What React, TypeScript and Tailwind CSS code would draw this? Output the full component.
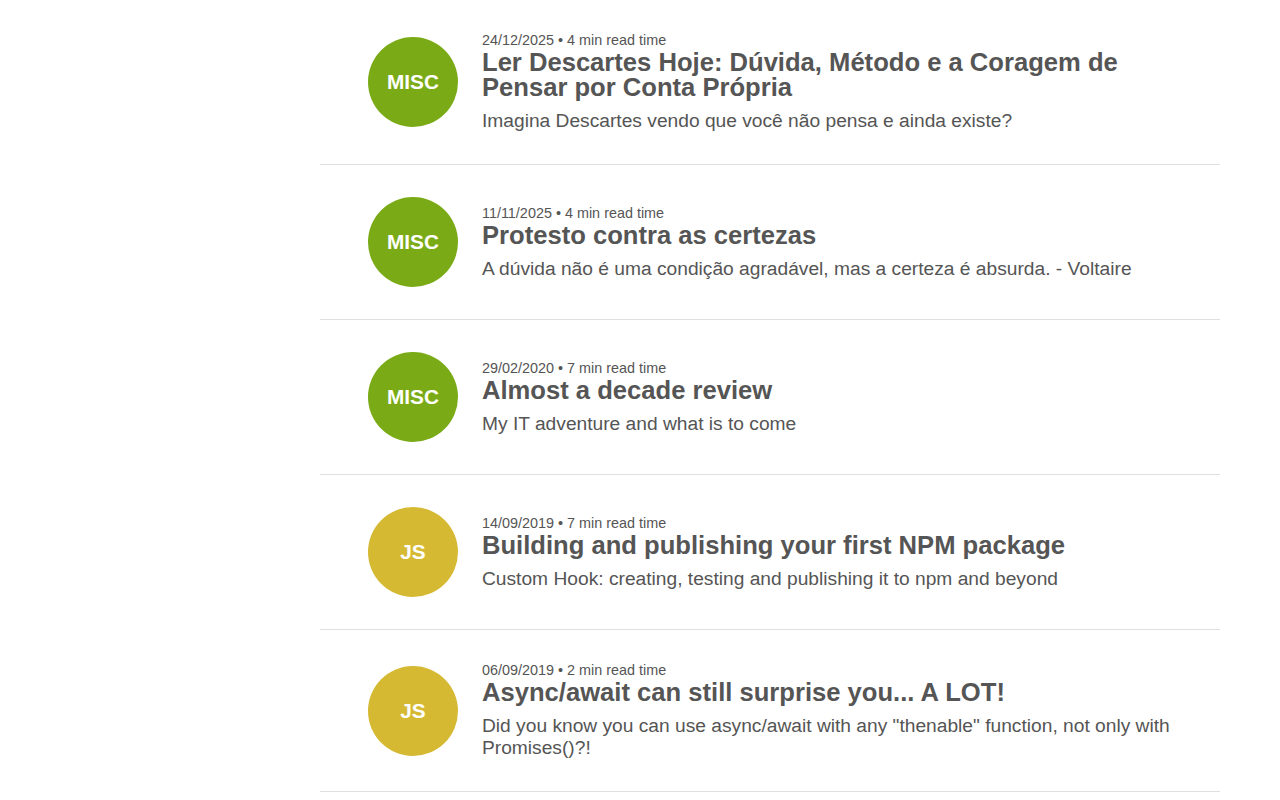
const posts = [
  {
    tag: 'MISC',
    date: '24/12/2025',
    read: '4 min read time',
    title: 'Ler Descartes Hoje: Dúvida, Método e a Coragem de Pensar por Conta Própria',
    desc: 'Imagina Descartes vendo que você não pensa e ainda existe?',
  },
  {
    tag: 'MISC',
    date: '11/11/2025',
    read: '4 min read time',
    title: 'Protesto contra as certezas',
    desc: 'A dúvida não é uma condição agradável, mas a certeza é absurda. - Voltaire',
  },
  {
    tag: 'MISC',
    date: '29/02/2020',
    read: '7 min read time',
    title: 'Almost a decade review',
    desc: 'My IT adventure and what is to come',
  },
  {
    tag: 'JS',
    date: '14/09/2019',
    read: '7 min read time',
    title: 'Building and publishing your first NPM package',
    desc: 'Custom Hook: creating, testing and publishing it to npm and beyond',
  },
  {
    tag: 'JS',
    date: '06/09/2019',
    read: '2 min read time',
    title: 'Async/await can still surprise you... A LOT!',
    desc: 'Did you know you can use async/await with any "thenable" function, not only with Promises()?!',
  },
]

const App = () => {
  return (
    <div className="min-h-screen bg-white font-['Liberation_Sans',Arial,sans-serif] text-[#555]">
      <ul className="w-[900px] ml-[320px]">
        {posts.map((p) => (
          <li key={p.title} className="flex items-center gap-6 px-12 py-8 border-b border-[#e0e0e0]">
            <div
              className={`w-[90px] h-[90px] shrink-0 rounded-full flex items-center justify-center text-white font-bold text-[20.8px] ${
                p.tag === 'JS' ? 'bg-[#d6b932]' : 'bg-[#7aab16]'
              }`}
            >
              {p.tag}
            </div>
            <div className="flex-1">
              <p className="text-[14.4px] leading-[16px]">
                {p.date} • {p.read}
              </p>
              <h2 className="text-[25.6px] leading-[25px] font-bold mt-[2px]">{p.title}</h2>
              <p className="text-[19.2px] leading-[22px] mt-[10px]">{p.desc}</p>
            </div>
          </li>
        ))}
      </ul>
    </div>
  )
}

export default App
